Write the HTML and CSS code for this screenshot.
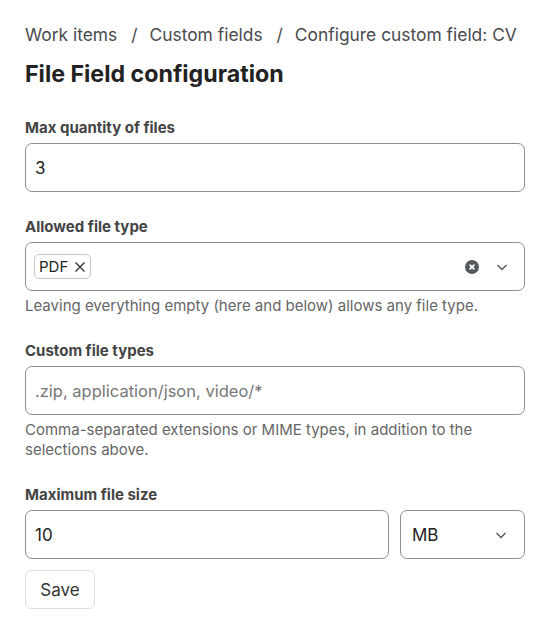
FILE: index.html
```html
<!DOCTYPE html>
<html lang="en">
<head>
    <meta charset="UTF-8">
    <title>File Field configuration</title>
    <link rel="stylesheet" href="styles.css">
</head>
<body>
    <div class="page">
        <nav class="breadcrumb">
            <span>Work items</span>
            <span class="sep">/</span>
            <span>Custom fields</span>
            <span class="sep">/</span>
            <span>Configure custom field: CV</span>
        </nav>
        <h1>File Field configuration</h1>

        <form class="config-form">
            <div class="field">
                <label for="maxQty">Max quantity of files</label>
                <div class="input">3</div>
            </div>

            <div class="field">
                <label>Allowed file type</label>
                <div class="input multi">
                    <span class="chip">PDF
                        <svg width="12" height="12" viewBox="0 0 12 12"><path d="M1.5 1.5l9 9M10.5 1.5l-9 9" stroke="#333" stroke-width="1.4" fill="none"/></svg>
                    </span>
                    <span class="spacer"></span>
                    <svg class="clear" width="16" height="16" viewBox="0 0 16 16"><circle cx="8" cy="8" r="7" fill="#55585c"/><path d="M5.6 5.6l4.8 4.8M10.4 5.6l-4.8 4.8" stroke="#fff" stroke-width="1.6"/></svg>
                    <svg class="chevron" width="14" height="14" viewBox="0 0 14 14"><path d="M2.5 5l4.5 4.5L11.5 5" stroke="#555" stroke-width="1.3" fill="none"/></svg>
                </div>
                <p class="help">Leaving everything empty (here and below) allows any file type.</p>
            </div>

            <div class="field">
                <label>Custom file types</label>
                <div class="input placeholder">.zip, application/json, video/*</div>
                <p class="help">Comma-separated extensions or MIME types, in addition to the selections above.</p>
            </div>

            <div class="field">
                <label>Maximum file size</label>
                <div class="size-row">
                    <div class="input size">10</div>
                    <div class="input unit">
                        <span>MB</span>
                        <svg class="chevron" width="14" height="14" viewBox="0 0 14 14"><path d="M2.5 5l4.5 4.5L11.5 5" stroke="#555" stroke-width="1.3" fill="none"/></svg>
                    </div>
                </div>
            </div>

            <button type="button" class="save-btn">Save</button>
        </form>
    </div>
</body>
</html>
```

FILE: styles.css
```css
body {
    font-family: 'Inter', 'Noto Sans', sans-serif;
    background: #fff;
    color: #222;
    margin: 0;
    padding: 0;
}

.page {
    width: 500px;
    padding: 24px 25px 0;
}

.breadcrumb {
    display: flex;
    font-size: 17.4px;
    line-height: 22px;
    color: #4a4a4f;
}

.breadcrumb .sep {
    margin: 0 12px 0 14px;
}

h1 {
    font-size: 23.2px;
    line-height: 30px;
    font-weight: 700;
    color: #222;
    margin: 13px 0 0;
}

.config-form {
    margin-top: 29px;
}

.field {
    margin-bottom: 25px;
}

label {
    display: block;
    font-size: 15px;
    line-height: 20px;
    font-weight: 700;
    color: #444;
    margin-bottom: 5px;
}

.input {
    box-sizing: border-box;
    height: 49px;
    border: 1px solid #8e8e93;
    border-radius: 7px;
    padding: 0 9px;
    display: flex;
    align-items: center;
    font-size: 17px;
    color: #222;
}

.placeholder {
    font-size: 16.5px;
    color: #777;
}

.multi {
    padding: 0 8px 0 8px;
}

.chip {
    display: inline-flex;
    align-items: center;
    gap: 6px;
    height: 25px;
    box-sizing: border-box;
    padding: 0 4px;
    border: 1px solid #c8c8cc;
    border-radius: 5px;
    font-size: 15px;
}

.spacer {
    flex: 1;
}

.clear {
    margin-right: 15px;
}

.chevron {
    margin-right: 7px;
}

.help {
    font-size: 15px;
    line-height: 20px;
    color: #666;
    margin: 5px 0 0;
}

.size-row {
    display: flex;
    gap: 11px;
}

.size {
    flex: 1;
}

.unit {
    width: 125px;
    justify-content: space-between;
    padding-left: 11px;
}

.save-btn {
    display: block;
    margin-top: -14px;
    font-family: inherit;
    font-size: 17px;
    color: #333;
    background: #fff;
    border: 1px solid #dedee2;
    border-radius: 6px;
    width: 70px;
    height: 39px;
    padding: 0;
}
```
